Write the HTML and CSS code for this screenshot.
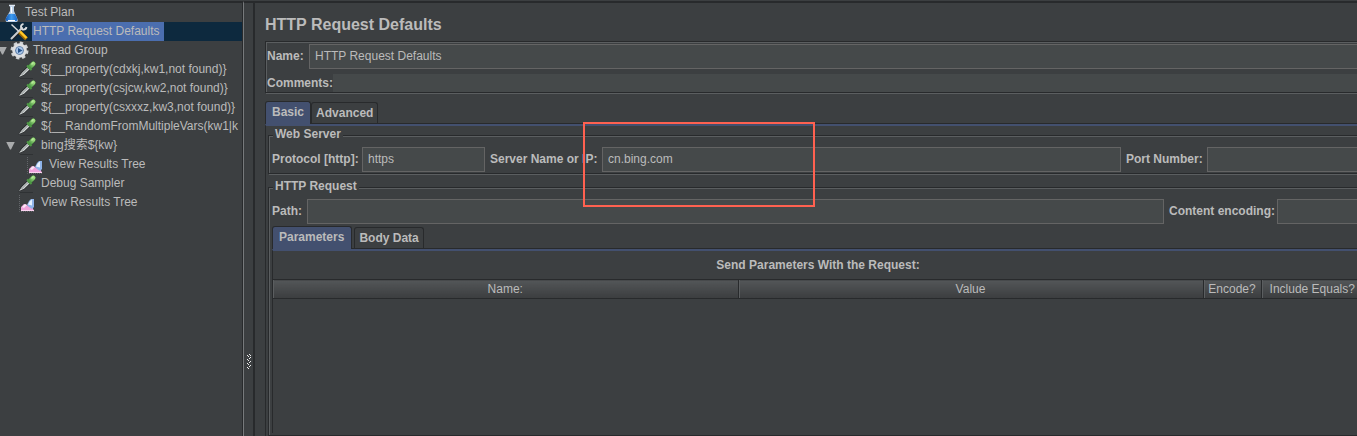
FILE: index.html
```html
<!DOCTYPE html>
<html lang="en">
<head>
<meta charset="utf-8">
<title>HTTP Request Defaults</title>
<link rel="stylesheet" href="styles.css">
</head>
<body>
<svg class="defs" aria-hidden="true">
  <defs>
    <linearGradient id="liquid" x1="0" y1="0" x2="1" y2="0"><stop offset="0" stop-color="#1257b4"/><stop offset=".5" stop-color="#3f9cf0"/><stop offset="1" stop-color="#1b68c8"/></linearGradient>
    <linearGradient id="bulb" x1="0" y1="1" x2="1" y2="0"><stop offset="0" stop-color="#4f9a48"/><stop offset="1" stop-color="#9bd97c"/></linearGradient>
    <symbol id="flask" viewBox="0 0 20 19">
      <path d="M9 3h4v5l3 7q2 4-1 4H6q-2 0-1-4l4-7z" fill="#b9cfe8"/>
      <path d="M7.500 11h6.500l2 4q1 3-1 3H6q-2 0-1-3z" fill="url(#liquid)"/>
      <path d="M8 2.500h6" stroke="#dfe8f4" stroke-width="1.500"/>
      <path d="M10.500 4v6M7 17.500h7" stroke="#fff" stroke-width="1.200"/>
    </symbol>
    <symbol id="tools" viewBox="0 0 20 19">
      <path d="M3 17L13 7" stroke="#1d2226" stroke-width="3.200"/>
      <path d="M2.500 16.500L13 6" stroke="#c9cdd0" stroke-width="2" stroke-linecap="round"/>
      <path d="M14.500 1.800q-3 .7-2.500 3.700l1.500 2q3.500.5 4-2.500" fill="none" stroke="#d8dcde" stroke-width="1.800"/>
      <path d="M2.500 2.500l8 7.500" stroke="#d8dadb" stroke-width="1.500"/>
      <path d="M10.500 10l7 7" stroke="#9b6807" stroke-width="4"/>
      <path d="M11 9.500l6.500 6.500" stroke="#ffc928" stroke-width="2.400"/>
    </symbol>
    <symbol id="gear" viewBox="0 0 20 19">
      <circle cx="10.500" cy="9.500" r="7.800" fill="none" stroke="#cfd2d4" stroke-width="2.400" stroke-dasharray="3.400 2.726"/>
      <circle cx="10.500" cy="9.500" r="7.300" fill="#dcdee0"/>
      <circle cx="10.500" cy="9.500" r="4.300" fill="#4c6f9c"/>
      <circle cx="10.500" cy="9.500" r="3.400" fill="#a9c6e8"/>
      <path d="M9 7l4.500 2.500L9 12z" fill="#24528c"/>
    </symbol>
    <symbol id="dropper" viewBox="0 0 20 19">
      <path d="M3 18.500h13" stroke="#2f3234"/>
      <path d="M1.500 17.500l2.500-5 7-6.500 3 3-7 6.500z" fill="#26292a"/>
      <path d="M2 17l3-4.200 6-5.800 2 2-6 5.800z" fill="#d6dada"/>
      <path d="M4.500 15l7-7" stroke="#7b8181" stroke-width=".9"/>
      <path d="M13 7L16.300 3.700" stroke="#3c6a36" stroke-width="5" stroke-linecap="round"/>
      <path d="M13 7L16.300 3.700" stroke="url(#bulb)" stroke-width="4.200" stroke-linecap="round"/>
      <path d="M14.500 4.500l2-2" stroke="#b6e89a" stroke-width="1.500"/>
      <path d="M10 5.500l4.500 4.500" stroke="#4f9a45" stroke-width="1.800"/>
    </symbol>
    <symbol id="chart" viewBox="0 0 20 19">
      <path d="M2.500 2v16.500H18" fill="none" stroke="#63666a" stroke-dasharray="1 1"/>
      <path d="M4 18v-4l3-3 3 1 3 2 2-1 2 5z" fill="#f0a3dc"/>
      <path d="M5 14l3-3 2 1-3 3z" fill="#fbe6f6"/>
      <path d="M10 12l2-4 2-2h3v8l-2 2-3-2z" fill="#8fb4ea"/>
      <path d="M11 11.500l2-3.500 2-1.500v6z" fill="#e6f1ff"/>
      <path d="M4 17.500h13" stroke="#fbd3f0"/>
    </symbol>
  </defs>
</svg>
<div class="app">
  <nav class="sidebar" aria-label="Test plan">
    <ul class="tree">
      <li class="node root"><svg class="icon"><use href="#flask"/></svg><span class="label">Test Plan</span></li>
      <li class="node level1 selected"><svg class="icon"><use href="#tools"/></svg><span class="label">HTTP Request Defaults</span></li>
      <li class="node level1"><button class="toggle" aria-label="Collapse Thread Group"></button><svg class="icon"><use href="#gear"/></svg><span class="label">Thread Group</span></li>
      <li class="node level2"><svg class="icon"><use href="#dropper"/></svg><span class="label">${__property(cdxkj,kw1,not found)}</span></li>
      <li class="node level2"><svg class="icon"><use href="#dropper"/></svg><span class="label">${__property(csjcw,kw2,not found)}</span></li>
      <li class="node level2"><svg class="icon"><use href="#dropper"/></svg><span class="label">${__property(csxxxz,kw3,not found)}</span></li>
      <li class="node level2"><svg class="icon"><use href="#dropper"/></svg><span class="label">${__RandomFromMultipleVars(kw1|k</span></li>
      <li class="node level2"><button class="toggle" aria-label="Collapse bing"></button><svg class="icon"><use href="#dropper"/></svg><span class="label">bing搜索${kw}</span></li>
      <li class="node level3"><svg class="icon"><use href="#chart"/></svg><span class="label">View Results Tree</span></li>
      <li class="node level2"><svg class="icon"><use href="#dropper"/></svg><span class="label">Debug Sampler</span></li>
      <li class="node level2"><svg class="icon"><use href="#chart"/></svg><span class="label">View Results Tree</span></li>
    </ul>
  </nav>
  <div class="splitter">
    <svg class="grip" viewBox="0 0 4 15" shape-rendering="crispEdges"><path d="M2 .5h1M0 1.500h1M3 1.500h1M1 2.500h1M2 4.500h1M0 5.500h1M3 3.500h1M1 6.500h1M2 8.500h1M0 9.500h1M3 7.500h1M1 10.500h1M2 12.500h1M0 13.500h1M3 11.500h1M1 14.500h1" stroke="#eee"/></svg>
  </div>
  <main class="content">
    <div class="editor">
      <h1 class="title">HTTP Request Defaults</h1>
      <div class="etched meta">
        <div class="name-row"><label for="name">Name:</label><input class="field" id="name" value="HTTP Request Defaults"></div>
        <div class="comment-row"><label for="comments">Comments:</label><input class="field plain" id="comments"></div>
      </div>
      <div class="tabs"><button class="tab active">Basic</button><button class="tab">Advanced</button></div>
      <div class="pane outer">
        <fieldset class="etched group">
          <legend>Web Server</legend>
          <div class="server-row">
            <label for="protocol">Protocol [http]:</label><input class="field" id="protocol" value="https">
            <label class="spaced" for="server">Server Name or IP:</label><input class="field" id="server" value="cn.bing.com">
            <label class="spaced" for="port">Port Number:</label><input class="field" id="port">
          </div>
        </fieldset>
        <fieldset class="etched group request">
          <legend>HTTP Request</legend>
          <div class="path-row">
            <label for="path">Path:</label><input class="field" id="path">
            <label class="spaced" for="encoding">Content encoding:</label><input class="field" id="encoding">
          </div>
          <div class="tabs inner"><button class="tab active">Parameters</button><button class="tab">Body Data</button></div>
          <div class="pane params">
            <table class="grid">
              <caption>Send Parameters With the Request:</caption>
              <colgroup><col><col><col class="col-encode"><col class="col-equals"></colgroup>
              <thead><tr><th>Name:</th><th>Value</th><th>Encode?</th><th>Include Equals?</th></tr></thead>
            </table>
          </div>
        </fieldset>
      </div>
    </div>
    <div class="highlight"></div>
  </main>
</div>
</body>
</html>
```
FILE: styles.css
```css
:root {
  --bg: #3c3f41;
  --dark: #282a2c;
  --light: #5b5e60;
  --field: #45494a;
  --field-border: #646464;
  --text: #bbbbbb;
  --tab: #43506f;
}
* { box-sizing: border-box; }
body {
  margin: 0;
  background: var(--bg);
  color: var(--text);
  font: 12px/15px "Liberation Sans", Arial, "Noto Sans CJK SC", sans-serif;
  overflow: hidden;
}
.defs { position: absolute; width: 0; height: 0; }
.app {
  display: grid;
  grid-template-columns: 244px 9px minmax(0, 1fr);
  min-height: 100vh;
  padding-top: 1px;
}
.sidebar {
  border-top: 2px solid var(--dark);
  border-right: 1px solid #777a7c;
  overflow: hidden;
}
.tree {
  height: 100%;
  margin: 0;
  padding: 0;
  list-style: none;
  border-right: 1px solid var(--dark);
  overflow: hidden;
}
.node { display: flex; align-items: center; height: 19px; white-space: nowrap; }
.root { padding-left: 1px; }
.level1 { padding-left: 9px; }
.level2 { padding-left: 17px; }
.level3 { padding-left: 25px; }
.icon { flex: none; width: 20px; height: 19px; margin-right: 3px; }
.label { padding: 2px 4px 2px 1px; }
.selected { background: #0d293e; }
.selected .label { background: #4b6eaf; }
.toggle {
  flex: none;
  width: 11px;
  height: 8px;
  margin-left: -11px;
  padding: 0;
  border: 0;
  background: linear-gradient(#a9abac, #a9abac);
  clip-path: polygon(0 0, 9px 0, 5px 8px, 4px 8px);
}
.splitter { padding: 351px 0 0 3px; border-top: 2px solid var(--dark); }
.grip { display: block; width: 4px; height: 15px; }
.content {
  position: relative;
  overflow: hidden;
  border-top: 2px solid var(--dark);
  border-left: 2px solid var(--dark);
}
.editor {
  display: flex;
  flex-direction: column;
  min-height: 100%;
  margin-right: -16px;
  padding: 10px 4px 0 10px;
}
.title { height: 20px; margin: 0 0 8px; padding-top: 2px; font-size: 16px; line-height: 20px; }
label, legend, caption, .tab { font-weight: bold; white-space: nowrap; }
.etched {
  border: 1px solid var(--dark);
  box-shadow: inset 1px 1px 0 var(--light), 1px 1px 0 var(--light);
}
.field {
  width: 100%;
  min-width: 0;
  height: 25px;
  padding: 0 5px 2px;
  border: 1px solid var(--field-border);
  border-radius: 0;
  outline: 0;
  background: var(--field);
  color: var(--text);
  font: inherit;
}
.meta { padding: 2px 0 0 1px; }
.name-row { display: grid; grid-template-columns: 42px 1fr; align-items: center; }
.comment-row { display: grid; grid-template-columns: auto 1fr; align-items: center; margin-top: 5px; }
.plain { height: 18px; border: 0; }
.tabs { display: flex; align-items: flex-end; height: 23px; margin-top: 8px; border-bottom: 1px solid var(--dark); }
.tab {
  height: 21px;
  padding: 0 4px;
  border: 1px solid var(--dark);
  border-bottom: 0;
  border-radius: 3px 3px 0 0;
  background: var(--bg);
  color: var(--text);
  font-size: 12px;
  font-family: inherit;
}
.tab.active { height: 23px; margin-bottom: -1px; padding: 0 6px 2px; background: var(--tab); }
.pane { flex: 1; border-left: 1px solid var(--dark); border-top: 2px solid var(--tab); }
.outer { display: flex; flex-direction: column; padding: 1px 2px 0; }
.group { min-width: 0; margin: 0; padding: 4px 3px 1px; }
.group legend { height: 16px; margin-left: 1px; padding: 0 2px; background: var(--bg); }
.request { flex: 1; margin-top: 5px; }
.server-row { display: grid; grid-template-columns: 90px 123px 117px 1fr 86px 156px; align-items: center; }
.path-row { display: grid; grid-template-columns: 35px 1fr 113px 86px; align-items: center; }
.spaced { padding-left: 5px; }
.inner { gap: 2px; margin-top: 2px; }
.inner .active { padding: 0 7px 2px 6px; }
.params { min-height: 184px; }
.grid { width: 100%; table-layout: fixed; border-collapse: collapse; }
.grid caption { height: 28px; padding-top: 7px; }
.col-encode { width: 58px; }
.col-equals { width: 102px; }
.grid th {
  height: 19px;
  padding: 0;
  border-top: 1px solid var(--dark);
  border-bottom: 1px solid var(--dark);
  background: linear-gradient(#535658, #3b3d3f);
  box-shadow: inset 1px 0 0 var(--light);
  font-weight: normal;
  white-space: nowrap;
}
.grid th + th { border-left: 1px solid var(--dark); }
.highlight {
  position: absolute;
  left: 328px;
  top: 119px;
  width: 232px;
  height: 85px;
  border: 2px solid #ff6150;
  pointer-events: none;
}
```
